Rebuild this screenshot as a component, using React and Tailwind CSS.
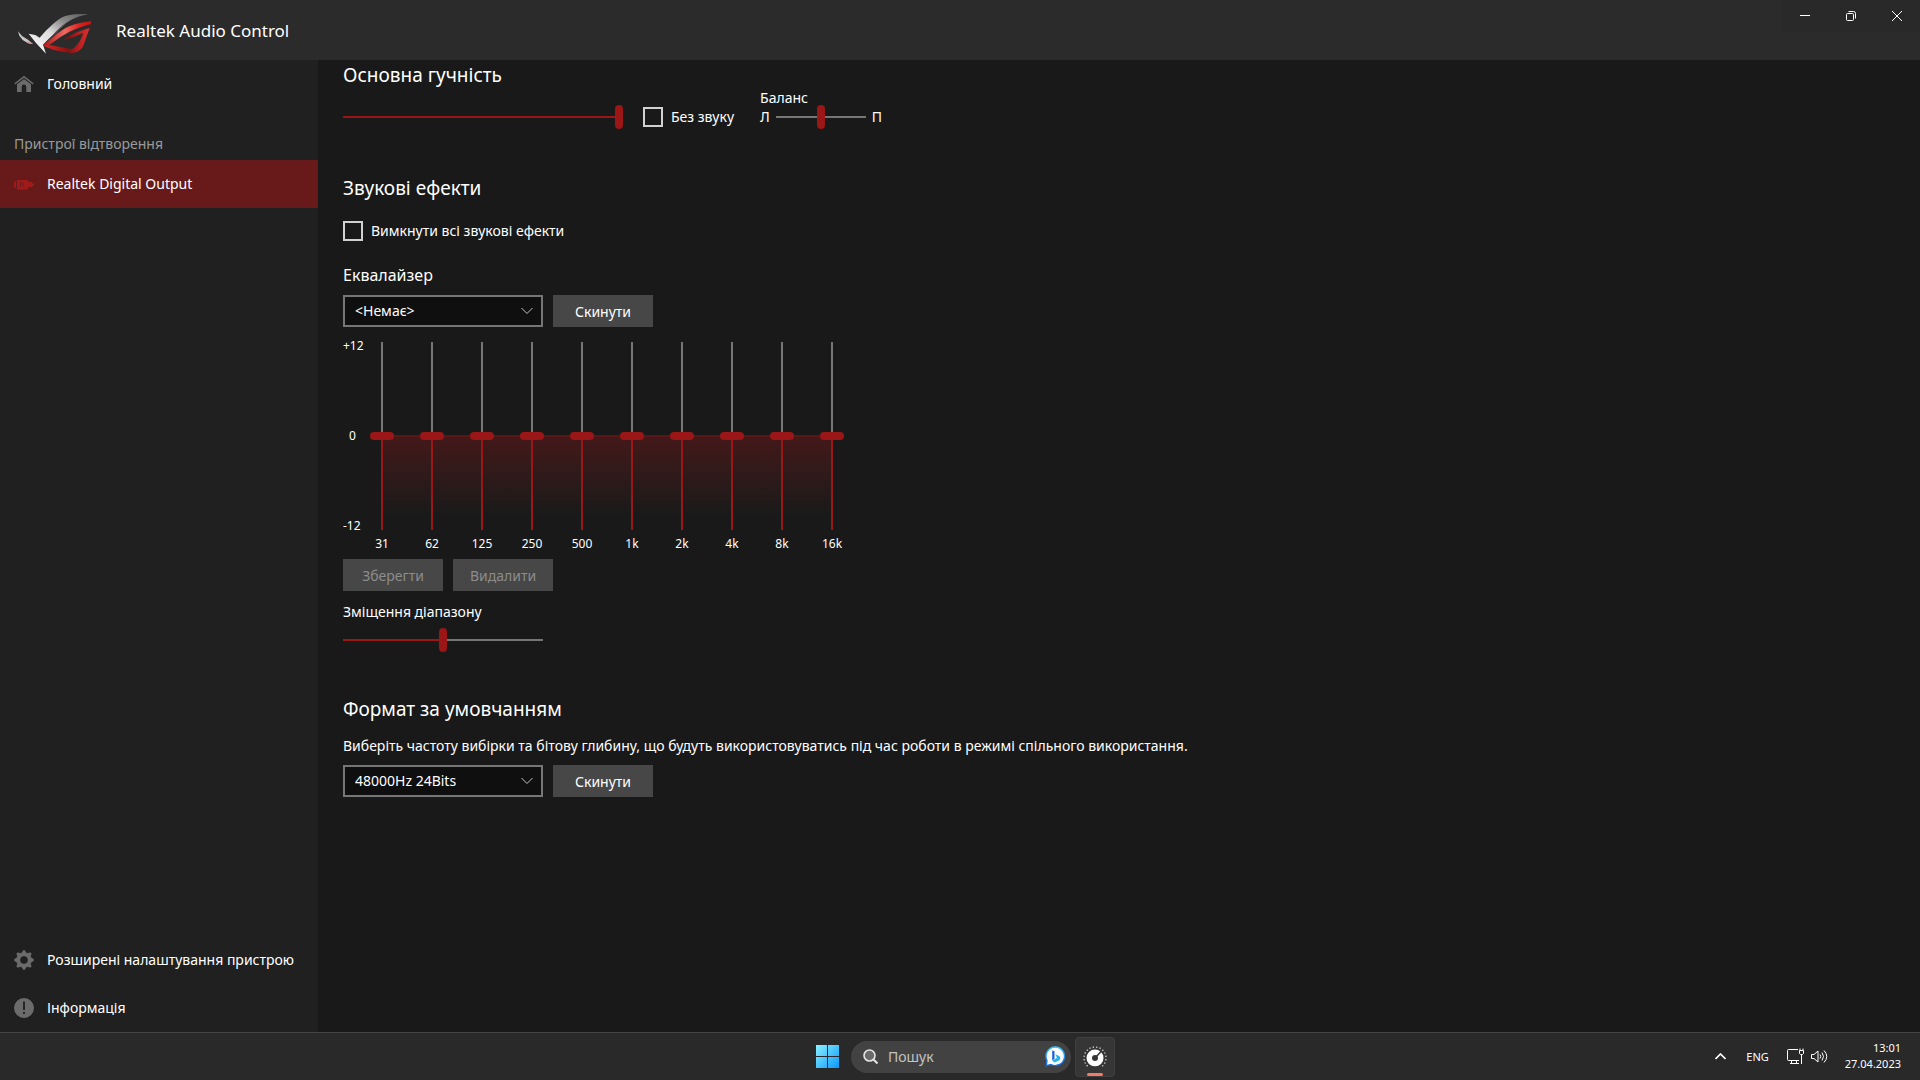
import React, { useState } from "react";

const THUMB_V =
  "[&::-webkit-slider-thumb]:appearance-none [&::-webkit-slider-thumb]:h-6 [&::-webkit-slider-thumb]:w-2 [&::-webkit-slider-thumb]:rounded-full [&::-webkit-slider-thumb]:bg-[#9b1616]";
const THUMB_H =
  "[&::-webkit-slider-thumb]:appearance-none [&::-webkit-slider-thumb]:h-2 [&::-webkit-slider-thumb]:w-6 [&::-webkit-slider-thumb]:rounded-full [&::-webkit-slider-thumb]:bg-[#9b1616]";

function Slider({ label, initial, className, filled = true }) {
  const [value, setValue] = useState(initial);
  const stop = filled ? value : 0;
  return (
    <input
      type="range"
      min="0"
      max="100"
      aria-label={label}
      value={value}
      onChange={(e) => setValue(Number(e.target.value))}
      className={`block h-6 appearance-none bg-[length:100%_2px] bg-center bg-no-repeat outline-none ${THUMB_V} ${className}`}
      style={{ backgroundImage: `linear-gradient(to right, #9b1616 ${stop}%, #767676 ${stop}%)` }}
    />
  );
}

function Band({ name }) {
  const [value, setValue] = useState(0);
  const stop = ((value + 12) / 24) * 100;
  return (
    <label className="flex w-[26px] flex-col items-center gap-[6px]">
      <input
        type="range"
        min="-12"
        max="12"
        value={value}
        onChange={(e) => setValue(Number(e.target.value))}
        className={`block h-[188px] w-6 appearance-none bg-[length:2px_100%] bg-center bg-no-repeat outline-none [direction:rtl] [writing-mode:vertical-lr] ${THUMB_H}`}
        style={{ backgroundImage: `linear-gradient(to top, #9b1616 ${stop}%, #767676 ${stop}%)` }}
      />
      <span className="text-xs leading-4">{name}</span>
    </label>
  );
}

function Check({ children }) {
  return (
    <label className="flex items-center gap-2 text-sm leading-5">
      <input
        type="checkbox"
        className="size-5 appearance-none border-2 border-[#d1d1d1] checked:bg-[#9b1616]"
      />
      {children}
    </label>
  );
}

function Select({ label, options }) {
  return (
    <div className="relative w-[200px]">
      <select
        aria-label={label}
        className="h-8 w-full appearance-none border-2 border-[#767676] bg-[#0f0f0f] pr-8 pl-[10px] text-sm text-white"
      >
        {options.map((o) => (
          <option key={o}>{o}</option>
        ))}
      </select>
      <svg className="pointer-events-none absolute top-3 right-[10px] h-2 w-3" viewBox="0 0 12 8" fill="none" stroke="#c4c4c4">
        <path d="M0.5 1 6 6.5 11.5 1" />
      </svg>
    </div>
  );
}

function Button({ children, disabled }) {
  return (
    <button
      type="button"
      disabled={disabled}
      className="h-8 w-[100px] bg-[#474747] pt-px text-sm text-white disabled:text-[#8c8c8c]"
    >
      {children}
    </button>
  );
}

function NavItem({ icon, children, active }) {
  return (
    <a
      href="#"
      aria-current={active ? "page" : undefined}
      className="flex h-12 items-center gap-[13px] px-[14px] text-sm whitespace-nowrap aria-[current=page]:bg-[#681a1a]"
    >
      {icon}
      {children}
    </a>
  );
}

function Logo() {
  return (
    <svg className="ml-[14px] h-[60px] w-[82px]" viewBox="0 0 246 180" role="img" aria-label="ROG">
      <defs>
        <linearGradient id="silver" x1="0" y1="1" x2="1" y2="0">
          <stop offset="0" stopColor="#ffffff" />
          <stop offset="0.45" stopColor="#dcdcdc" />
          <stop offset="0.7" stopColor="#8a8a8a" />
          <stop offset="1" stopColor="#5a5a5a" />
        </linearGradient>
        <linearGradient id="red" x1="0" y1="0" x2="1" y2="0">
          <stop offset="0" stopColor="#a81212" />
          <stop offset="0.45" stopColor="#ee6a60" />
          <stop offset="0.75" stopColor="#e02020" />
          <stop offset="1" stopColor="#c01212" />
        </linearGradient>
        <linearGradient id="redLow" x1="0" y1="0" x2="1" y2="0">
          <stop offset="0" stopColor="#e02626" />
          <stop offset="0.55" stopColor="#8a1010" />
          <stop offset="1" stopColor="#e23030" />
        </linearGradient>
      </defs>
      <path fill="#c9c9c9" d="M12 94 24 108 42 119 57 132 42 130 26 120 16 107Z" />
      <path fill="#e08a8a" d="M38 122 57 132 42 130Z" />
      <path fill="url(#silver)" d="M222 43C188 40 160 44 142 53 118 68 94 93 77 113L64 105 44 101 66 129 96 161 87 134C104 118 122 98 142 82 160 64 186 49 222 43Z" />
      <path fill="#555" d="M205 48C172 55 152 70 128 99L110 113C132 86 155 60 205 48Z" />
      <path fill="url(#red)" d="M232 63C196 68 166 75 144 91 124 105 104 121 87 136L103 137C124 122 148 102 180 89 198 82 214 77 230 73Z" />
      <path fill="url(#redLow)" d="M227 84C198 92 168 103 150 120L178 112 207 99C202 119 192 135 174 148L112 136 87 136C110 150 142 156 174 159 190 158 202 149 207 139Z" />
    </svg>
  );
}

const bands = ["31", "62", "125", "250", "500", "1k", "2k", "4k", "8k", "16k"];

const homeIcon = (
  <svg className="size-5 shrink-0" viewBox="0 0 20 20" fill="#6b6b6b">
    <path d="M10 1.8 19.6 9.2 18.8 10.4 10 3.8 1.2 10.4.4 9.2Z" />
    <path d="M10 5 17 10.2V18H12.3V12.8A2.3 2.3 0 0 0 7.700 12.8V18H3V10.200Z" />
  </svg>
);

const plugIcon = (
  <svg className="size-5 shrink-0" viewBox="0 0 20 20" fill="#a01a1a">
    <path d="M0 7.500H2V13.500H0ZM3 6H13L15 8H18V9.500H20V12H18V13H15L13 15.500H3Z" />
    <path d="M6.500 8V13M9 8.500V12.500" stroke="#681a1a" fill="none" />
  </svg>
);

const gearIcon = (
  <svg className="size-5 shrink-0" viewBox="0 0 20 20">
    <circle cx="10" cy="10" r="5.800" fill="none" stroke="#6b6b6b" strokeWidth="4" />
    <g fill="#6b6b6b">
      {[0, 45, 90, 135, 180, 225, 270, 315].map((a) => (
        <path key={a} d="M7.800 3 9 .2H11L12.200 3Z" transform={`rotate(${a} 10 10)`} />
      ))}
    </g>
  </svg>
);

const infoIcon = (
  <svg className="size-5 shrink-0" viewBox="0 0 20 20">
    <circle cx="10" cy="10" r="10" fill="#6b6b6b" />
    <path d="M9 3.500H11V12H9ZM9 14H11V16H9Z" fill="#262626" />
  </svg>
);

export default function App() {
  return (
    <div className="flex min-h-screen flex-col bg-[#191919] font-['Noto_Sans','Open_Sans',sans-serif] text-white">
      <header className="flex h-[60px] items-start bg-[#2b2b2b]">
        <Logo />
        <h1 className="ml-5 text-[17px] leading-[62px]">Realtek Audio Control</h1>
        <div className="ml-auto flex bg-[#292929]">
          <button type="button" aria-label="Згорнути" className="grid h-8 w-[46px] place-items-center">
            <svg className="size-[10px]" viewBox="0 0 10 10" stroke="#fff">
              <path d="M0 4.500H10" />
            </svg>
          </button>
          <button type="button" aria-label="Відновити" className="grid h-8 w-[46px] place-items-center">
            <svg className="size-[10px]" viewBox="0 0 10 10" stroke="#fff" fill="none">
              <rect x="0.500" y="2.500" width="7" height="7" rx="1" />
              <path d="M2.500 .5H7.500A2 2 0 0 1 9.500 2.500V7.500" />
            </svg>
          </button>
          <button type="button" aria-label="Закрити" className="grid h-8 w-[46px] place-items-center">
            <svg className="size-[10px]" viewBox="0 0 10 10" stroke="#fff">
              <path d="M0 0 10 10M10 0 0 10" />
            </svg>
          </button>
        </div>
      </header>

      <div className="flex flex-1">
        <nav className="flex w-[318px] shrink-0 flex-col bg-[#202020]">
          <NavItem icon={homeIcon}>Головний</NavItem>
          <h2 className="mt-6 px-[14px] pb-1 text-sm leading-6 text-[#9a9a9a]">Пристрої відтворення</h2>
          <NavItem icon={plugIcon} active>
            Realtek Digital Output
          </NavItem>
          <div className="mt-auto">
            <NavItem icon={gearIcon}>Розширені налаштування пристрою</NavItem>
            <NavItem icon={infoIcon}>Інформація</NavItem>
          </div>
        </nav>

        <main className="flex-1 px-[25px]">
          <section>
            <h2 className="text-[19px] leading-[30px]">Основна гучність</h2>
            <div className="flex items-end">
              <Slider label="Основна гучність" initial={100} className="w-[280px]" />
              <div className="ml-5 flex h-6 items-center">
                <Check>Без звуку</Check>
              </div>
              <div className="ml-[26px] text-sm">
                <div className="leading-[15px]">Баланс</div>
                <div className="flex h-6 items-center gap-[6px]">
                  <span>Л</span>
                  <Slider label="Баланс" initial={50} filled={false} className="w-[90px]" />
                  <span>П</span>
                </div>
              </div>
            </div>
          </section>

          <section className="mt-11">
            <h2 className="text-[19px] leading-[30px]">Звукові ефекти</h2>
            <div className="mt-[18px] flex">
              <Check>Вимкнути всі звукові ефекти</Check>
            </div>
            <h3 className="mt-[22px] text-base leading-6">Еквалайзер</h3>
            <div className="mt-2 flex gap-[10px]">
              <Select label="Еквалайзер" options={["<Немає>"]} />
              <Button>Скинути</Button>
            </div>
            <div className="mt-[15px] flex">
              <div className="flex h-[188px] w-[26px] flex-col justify-between text-xs leading-2">
                <span>+12</span>
                <span className="pl-[6px]">0</span>
                <span>-12</span>
              </div>
              <div className="relative flex gap-6">
                <div className="absolute top-[93px] right-[13px] left-[13px] h-[95px] border-t-2 border-[#5a1517] bg-linear-to-b from-[#431819] to-[#191919] to-85%" />
                {bands.map((b) => (
                  <div key={b} className="relative">
                    <Band name={b} />
                  </div>
                ))}
              </div>
            </div>
            <div className="mt-[7px] flex gap-[10px]">
              <Button disabled>Зберегти</Button>
              <Button disabled>Видалити</Button>
            </div>
            <h3 className="mt-[9px] text-sm leading-6">Зміщення діапазону</h3>
            <Slider label="Зміщення діапазону" initial={50} className="mt-1 w-[200px]" />
          </section>

          <section className="mt-[42px]">
            <h2 className="text-[19px] leading-[30px]">Формат за умовчанням</h2>
            <p className="mt-[10px] text-sm leading-6">
              Виберіть частоту вибірки та бітову глибину, що будуть використовуватись під час роботи в режимі спільного використання.
            </p>
            <div className="mt-[7px] flex gap-[10px]">
              <Select label="Формат за умовчанням" options={["48000Hz 24Bits"]} />
              <Button>Скинути</Button>
            </div>
          </section>
        </main>
      </div>

      <footer className="grid h-12 grid-cols-[1fr_auto_1fr] items-center border-t border-[#454545] bg-[#292929]">
        <div />
        <div className="flex items-center pl-[10px]">
          <button type="button" aria-label="Пуск" className="mr-3 grid size-6 place-items-center">
            <svg className="size-[23px]" viewBox="0 0 23 23">
              <defs>
                <linearGradient id="win" x1="0" y1="0" x2="1" y2="1">
                  <stop offset="0" stopColor="#8af1ff" />
                  <stop offset="1" stopColor="#0a98fb" />
                </linearGradient>
              </defs>
              <path fill="url(#win)" d="M0 0H11V11H0ZM12 0H23V11H12ZM0 12H11V23H0ZM12 12H23V23H12Z" />
            </svg>
          </button>
          <label className="flex h-8 w-[220px] items-center rounded-full bg-[#424242] pr-[5px] pl-3">
            <svg className="size-[15px] shrink-0" viewBox="0 0 15 15" fill="#6a6a6a" stroke="#e4e4e4" strokeWidth="1.600">
              <circle cx="6.500" cy="6.500" r="5.500" />
              <path d="M10.500 10.500 14.500 14.500" strokeWidth="2" />
            </svg>
            <input
              type="text"
              aria-label="Пошук"
              placeholder="Пошук"
              className="ml-[10px] min-w-0 flex-1 bg-transparent text-sm outline-none placeholder:text-[#c4c4c4]"
            />
            <svg className="size-[21px] shrink-0" viewBox="0 0 21 21">
              <defs>
                <linearGradient id="bing" x1="0" y1="0" x2="0" y2="1">
                  <stop offset="0" stopColor="#32c0f4" />
                  <stop offset="1" stopColor="#1668e0" />
                </linearGradient>
              </defs>
              <path d="M10.500 1A9.300 9.300 0 1 1 6 18.600L1.200 19.800 2 14.500A9.300 9.300 0 0 1 10.500 1Z" fill="#fff" stroke="url(#bing)" strokeWidth="1.400" />
              <path d="M7.200 4.500 9.500 5.300V12.700L7.200 14.500Z" fill="#1b5fdc" />
              <path d="M10.300 8.300 14.500 10.300C16 12 15 14 13.500 14.800L9.500 16.500 7.200 14.500 12 12Z" fill="#25b3ee" />
            </svg>
          </label>
          <button
            type="button"
            aria-label="Realtek Audio Control"
            className="relative ml-1 grid size-10 place-items-center rounded border border-[#404040] bg-[#363636]"
          >
            <svg className="size-6" viewBox="0 0 24 24">
              <circle cx="12" cy="13" r="8.500" fill="#fff" />
              <circle cx="12" cy="13" r="3" fill="#363636" />
              <path d="M12.500 12.500 18.500 6" stroke="#363636" strokeWidth="1.600" />
              <circle cx="12" cy="13" r="11" fill="none" stroke="#d8d8d8" strokeWidth="1.300" strokeDasharray="1.300 2.220" pathLength="70.400" transform="rotate(150 12 13)" />
              <path d="M3 24 6.500 21.500H17.500L21 24Z" fill="#363636" />
            </svg>
            <span className="absolute bottom-0 h-[3px] w-4 rounded-full bg-[#f47c66]" />
          </button>
        </div>
        <div className="flex items-center justify-end pr-[19px] text-[11px]">
          <button type="button" aria-label="Приховані піктограми" className="mr-5">
            <svg className="h-[7px] w-[11px]" viewBox="0 0 11 7" fill="none" stroke="#fff" strokeWidth="1.600">
              <path d="M.5 6 5.500 1 10.500 6" />
            </svg>
          </button>
          <button type="button" className="pt-px">ENG</button>
          <svg className="ml-[18px] size-[17px]" viewBox="0 0 17 17" fill="none" stroke="#fff">
            <path d="M11 1.500H1.500A1 1 0 0 0 .5 2.500V11.500A1 1 0 0 0 1.500 12.500H12M4.500 12.500V15.500M9.500 12.500V15.500M3 15.500H12" />
            <path d="M12.500 2.500H16.500V5.500L15.500 6.500H13.500L12.500 5.500ZM13 .5V2.500M16 .5V2.500M14.500 6.500V16" />
          </svg>
          <svg className="ml-[7px] size-[17px]" viewBox="0 0 17 17" fill="none" stroke="#fff">
            <path d="M.5 6.500H3L7 3V14L3 10.500H.5Z" />
            <path d="M9 6.500Q10.500 8.500 9 10.500M11 4.500Q14 8.500 11 12.500M13 2.500Q18.500 8.500 13 14.500" />
          </svg>
          <div className="ml-[17px] pb-[2px] text-right leading-4">
            <div>13:01</div>
            <div>27.04.2023</div>
          </div>
        </div>
      </footer>
    </div>
  );
}
